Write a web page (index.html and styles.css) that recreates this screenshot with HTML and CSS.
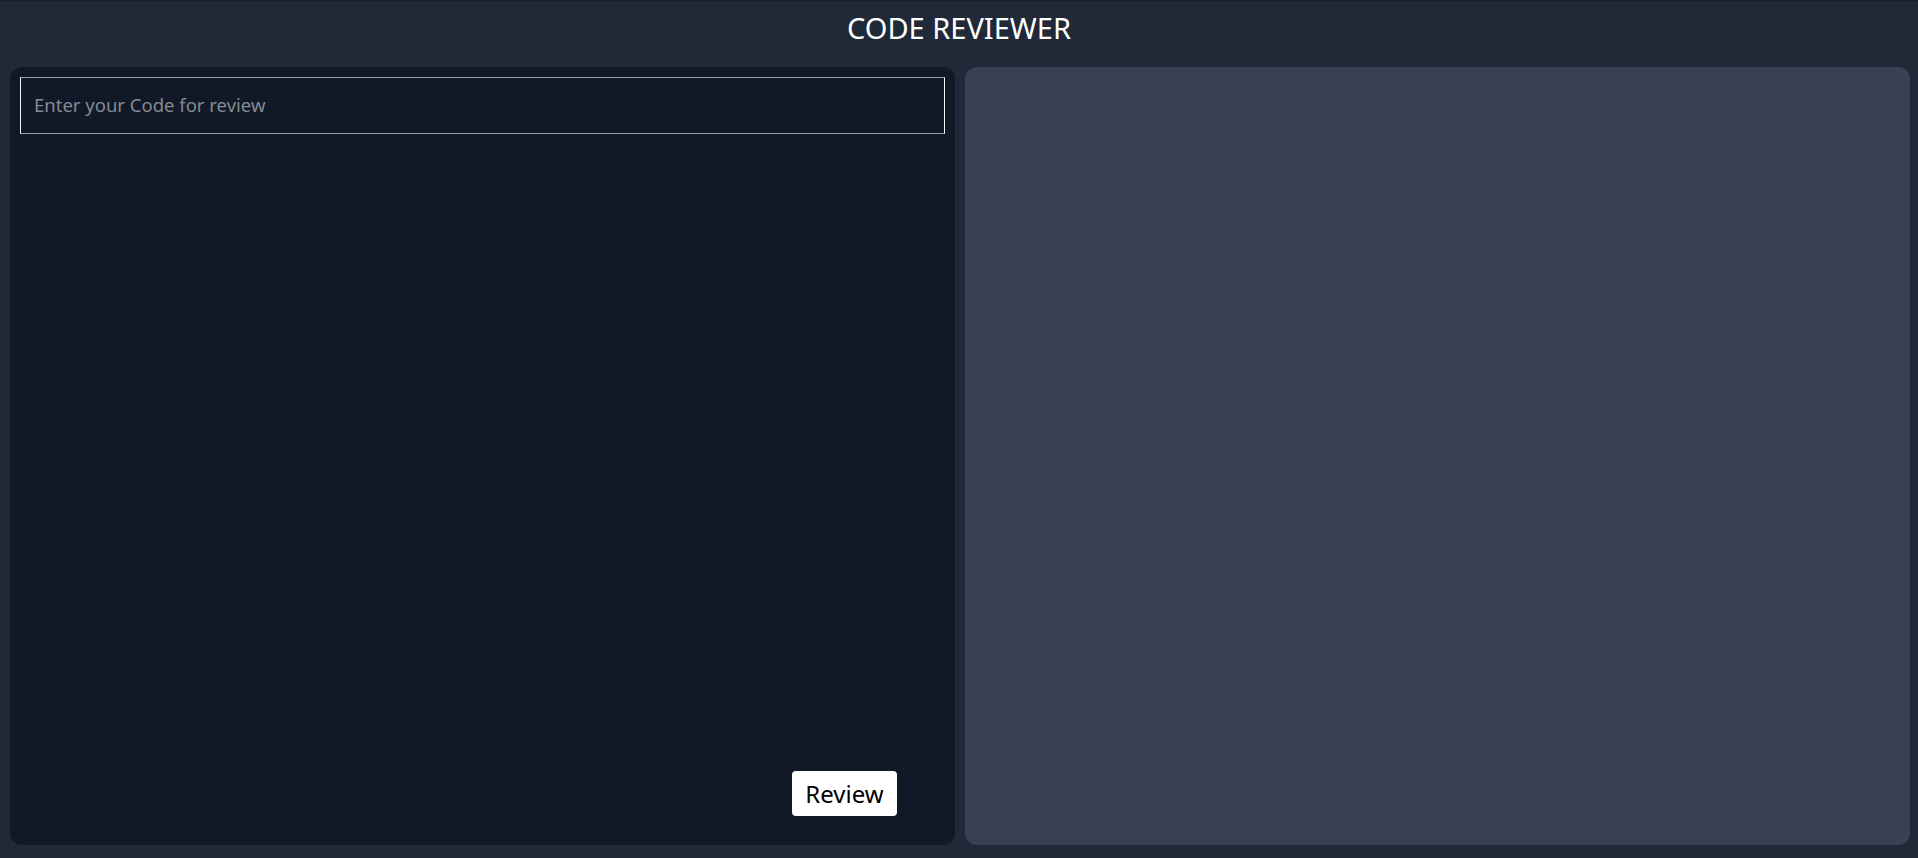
FILE: index.html
```html
<!DOCTYPE html>
<html lang="en">
<head>
<meta charset="utf-8">
<title>Code Reviewer</title>
<link rel="stylesheet" href="styles.css">
</head>
<body>
<header class="header">
  <h1 class="title">CODE REVIEWER</h1>
</header>
<main class="main">
  <section class="panel panel-input">
    <textarea class="code-input" placeholder="Enter your Code for review"></textarea>
    <div class="actions">
      <button class="review-btn" type="button">Review</button>
    </div>
  </section>
  <section class="panel panel-output"></section>
</main>
</body>
</html>
```
FILE: styles.css
```css
* { box-sizing: border-box; }
html, body { height: 100%; }
body {
  margin: 0;
  background: #1f2937;
  font-family: "Noto Sans", "Open Sans", sans-serif;
  display: flex;
  flex-direction: column;
  border-top: 1px solid #19212c;
}
.header {
  height: 66px;
  display: flex;
  justify-content: center;
  align-items: flex-start;
}
.title {
  margin: 7px 0 0;
  font-size: 29px;
  font-weight: 400;
  color: #ffffff;
  line-height: 40px;
}
.main {
  flex: 1;
  display: grid;
  grid-template-columns: minmax(0, 1fr) minmax(0, 1fr);
  gap: 10px;
  padding: 0 8px 13px 10px;
}
.panel {
  min-width: 0;
  border-radius: 12px;
}
.panel-input {
  background: #111827;
  padding: 10px;
  display: flex;
  flex-direction: column;
}
.panel-output {
  background: #374151;
}
.code-input {
  height: 57px;
  width: 100%;
  background: #111827;
  border: 1px solid;
  border-color: #9ca3af #f3f4f6 #9ca3af #f3f4f6;
  color: #e5e7eb;
  font-family: inherit;
  font-size: 18.5px;
  padding: 14px 13px;
  resize: none;
  outline: none;
}
.code-input::placeholder { color: #858a93; }
.actions {
  margin-top: auto;
  display: flex;
  justify-content: flex-end;
  padding: 0 48px 19px 0;
}
.review-btn {
  width: 105px;
  height: 45px;
  background: #ffffff;
  border: none;
  border-radius: 4px;
  color: #000;
  font-family: inherit;
  font-size: 24px;
  padding: 0;
  cursor: pointer;
}
```
